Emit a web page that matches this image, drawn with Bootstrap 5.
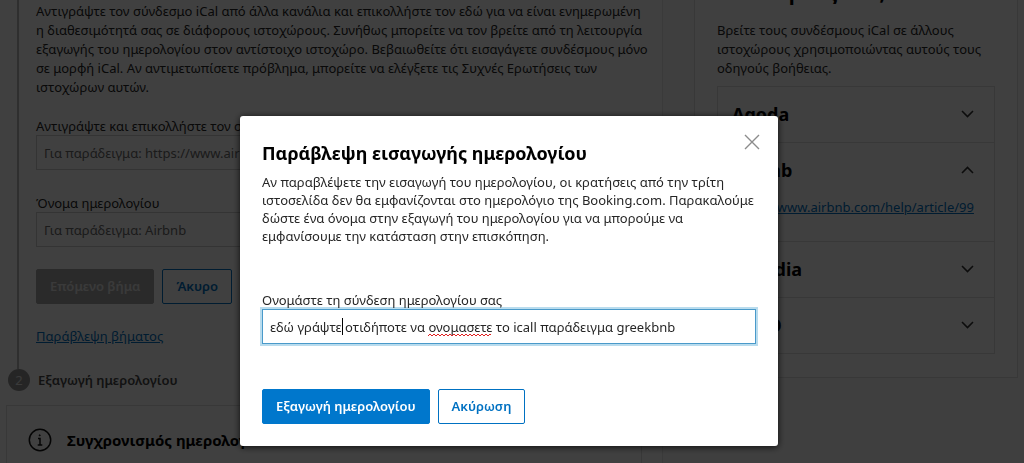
<!DOCTYPE html>
<html lang="el">
<head>
<meta charset="utf-8">
<meta name="viewport" content="width=device-width, initial-scale=1">
<title>Συγχρονισμός ημερολογίου</title>
<link href="https://cdn.jsdelivr.net/npm/bootstrap@5.3.0/dist/css/bootstrap.min.css" rel="stylesheet">
<style>
  body { font: 13px/19px "Noto Sans", "Open Sans", sans-serif; color: #262626; background: #f6f6f6; height: 100vh; overflow: hidden; }
  a { color: #0071c2; }
  .page-grid { display: grid; grid-template-columns: minmax(0, 663fr) minmax(0, 324fr); column-gap: 31px; padding-right: 6px; background: #fafafa; }
  .steps { background: #fff; border-right: 1px solid #e6e6e6; min-height: 100vh; }
  .step-body { margin-left: 17px; border-left: 2px solid #bdbdbd; padding: 2px 20px 23px 17px; }
  .step-intro { margin-bottom: 20px; white-space: nowrap; }
  label { display: block; line-height: 18px; }
  .form-control { font-size: 13px; line-height: 19px; height: 35px; padding: 7px; border: 1px solid #cfcfcf; border-radius: 0; color: #262626; }
  .form-control::placeholder { color: #6b6b6b; }
  .btn { font-size: 13px; line-height: 19px; font-weight: 600; padding: 7px 13px; border-radius: 2px; }
  .btn-main { background: #0077cc; border-color: #0077cc; color: #fff; }
  .btn-line { border-color: #0071c2; color: #0071c2; background: #fff; }
  .btn-off, .btn-off:disabled { background: #a8a8a8; border-color: #a8a8a8; color: #e6e6e6; opacity: 1; }
  .step-actions { margin: 22px 0 23px; }
  .step-number { width: 22px; height: 22px; border-radius: 50%; background: #949494; color: #e6e6e6; line-height: 22px; text-align: center; }
  .step-title { font-weight: 600; color: #4a4a4a; }
  .sync-card { margin: 14px 20px 0 6px; padding: 21px; gap: 15px; border: 1px solid #dedede; }
  .sync-card h2 { font-size: 15px; line-height: 26px; font-weight: 700; margin: 0; color: #000; }
  .help-card { background: #fff; border: 1px solid #e0e0e0; border-top: 0; padding: 0 22px 23px; align-self: start; overflow: hidden; }
  .help-card > h2 { font-size: 20px; line-height: 26px; font-weight: 700; color: #000; margin: -20px 0 15px; }
  .help-card > p { margin-bottom: 8px; }
  .help-list { border: 1px solid #e0e0e0; }
  .help-list section + section { border-top: 1px solid #e0e0e0; }
  .help-toggle { border: 0; background: none; padding: 14px 20px 15px 14px; color: #000; font-size: 18px; line-height: 26px; font-weight: 700; }
  .help-link { padding: 0 14px 24px; }
  .modal-backdrop.show { opacity: .75; }
  .modal { padding-right: 6px; }
  .modal-dialog { max-width: 538px; margin: 116px auto 0; }
  .modal-content { border: 0; border-radius: 3px; padding: 23px 22px 22px; box-shadow: 0 1px 7px rgba(0,0,0,.8); color: #262626; }
  .modal-title { font-size: 18px; line-height: 28px; font-weight: 700; color: #000; }
  .modal-text { line-height: 18px; margin: 6px 0 46px; }
  .close-x { border: 0; background: none; padding: 0; line-height: 0; margin: -5px -4px 0 0; }
  .naming .form-control { border-color: #4a9aca; box-shadow: 0 0 0 2px #b9dcee; }
  .naming-label { position: relative; z-index: 1; }
  .modal-actions { margin-top: 45px; }
  .caret-bar { position: absolute; left: 80px; top: 9px; width: 1px; height: 17px; background: #000; }
  .spelling { position: absolute; left: 166px; top: 24px; }
</style>
</head>
<body>
<main class="page-grid">
  <div class="steps">
    <div class="step-body">
      <p class="step-intro">Αντιγράψτε τον σύνδεσμο iCal από άλλα κανάλια και επικολλήστε τον εδώ για να είναι ενημερωμένη<br>η διαθεσιμότητά σας σε διάφορους ιστοχώρους. Συνήθως μπορείτε να τον βρείτε από τη λειτουργία<br>εξαγωγής του ημερολογίου στον αντίστοιχο ιστοχώρο. Βεβαιωθείτε ότι εισαγάγετε συνδέσμους μόνο<br>σε μορφή iCal. Αν αντιμετωπίσετε πρόβλημα, μπορείτε να ελέγξετε τις Συχνές Ερωτήσεις των<br>ιστοχώρων αυτών.</p>
      <label for="ical-url">Αντιγράψτε και επικολλήστε τον σύνδεσμο</label>
      <input class="form-control mb-4" id="ical-url" type="text" placeholder="Για παράδειγμα: https://www.airbnb.com">
      <label for="ical-name">Όνομα ημερολογίου</label>
      <input class="form-control" id="ical-name" type="text" placeholder="Για παράδειγμα: Airbnb">
      <div class="step-actions d-flex gap-2">
        <button class="btn btn-off" type="button" disabled>Επόμενο βήμα</button>
        <button class="btn btn-line" type="button">Άκυρο</button>
      </div>
      <a href="#skip">Παράβλεψη βήματος</a>
    </div>
    <div class="d-flex align-items-center gap-2 ps-2">
      <span class="step-number">2</span><span class="step-title">Εξαγωγή ημερολογίου</span>
    </div>
    <div class="sync-card d-flex align-items-center">
      <svg width="24" height="24" viewBox="0 0 24 24" fill="none" stroke="#111" stroke-width="1.5" aria-hidden="true"><circle cx="12" cy="12" r="10.7"/><path d="M10 10.5h2V17M9.7 17h4.6"/><circle cx="11.7" cy="7.3" r=".6" fill="#111" stroke-width=".8"/></svg>
      <h2>Συγχρονισμός ημερολογίου</h2>
    </div>
  </div>
  <aside class="help-card">
    <h2>συνδέσμους iCal;</h2>
    <p>Βρείτε τους συνδέσμους iCal σε άλλους<br>ιστοχώρους χρησιμοποιώντας αυτούς τους<br>οδηγούς βοήθειας.</p>
    <div class="help-list">
      <section><button type="button" class="help-toggle d-flex w-100 align-items-center justify-content-between">Agoda<svg width="13" height="9" viewBox="0 0 13 9" fill="none" stroke="#333" stroke-width="1.6" aria-hidden="true"><path d="M1 1l5.500 5.500L12 1"/></svg></button></section>
      <section><button type="button" class="help-toggle d-flex w-100 align-items-center justify-content-between">Airbnb<svg width="13" height="9" viewBox="0 0 13 9" fill="none" stroke="#333" stroke-width="1.6" aria-hidden="true"><path d="M1 7l5.500-5.500L12 7"/></svg></button>
        <div class="help-link text-nowrap"><a href="https://www.airbnb.com/help/article/99">https://www.airbnb.com/help/article/99</a></div></section>
      <section><button type="button" class="help-toggle d-flex w-100 align-items-center justify-content-between">Expedia<svg width="13" height="9" viewBox="0 0 13 9" fill="none" stroke="#333" stroke-width="1.6" aria-hidden="true"><path d="M1 1l5.500 5.500L12 1"/></svg></button></section>
      <section><button type="button" class="help-toggle d-flex w-100 align-items-center justify-content-between">VRBO<svg width="13" height="9" viewBox="0 0 13 9" fill="none" stroke="#333" stroke-width="1.6" aria-hidden="true"><path d="M1 1l5.500 5.500L12 1"/></svg></button></section>
    </div>
  </aside>
</main>
<div class="modal-backdrop show"></div>
<div class="modal show d-block" tabindex="-1" role="dialog" aria-modal="true" aria-labelledby="skip-title">
  <div class="modal-dialog">
    <div class="modal-content">
      <div class="d-flex justify-content-between align-items-start">
        <h1 class="modal-title" id="skip-title">Παράβλεψη εισαγωγής ημερολογίου</h1>
        <button class="close-x" type="button" aria-label="Κλείσιμο"><svg width="16" height="16" viewBox="0 0 16 16" fill="none" stroke="#8c8c8c" stroke-width="1.400"><path d="M1 1l14 14M15 1L1 15"/></svg></button>
      </div>
      <p class="modal-text">Αν παραβλέψετε την εισαγωγή του ημερολογίου, οι κρατήσεις από την τρίτη<br>ιστοσελίδα δεν θα εμφανίζονται στο ημερολόγιο της Booking.com. Παρακαλούμε<br>δώστε ένα όνομα στην εξαγωγή του ημερολογίου για να μπορούμε να<br>εμφανίσουμε την κατάσταση στην επισκόπηση.</p>
      <label class="naming-label" for="link-name">Ονομάστε τη σύνδεση ημερολογίου σας</label>
      <div class="naming position-relative">
        <input class="form-control" id="link-name" type="text" spellcheck="false" value="εδώ γράψτε οτιδήποτε να ονομασετε το icall παράδειγμα greekbnb">
        <span class="caret-bar"></span>
        <svg class="spelling" width="63" height="4" fill="none" stroke="#e02020" aria-hidden="true"><defs><pattern id="wave" width="4" height="4" patternUnits="userSpaceOnUse"><path d="M0 3L2 1L4 3"/></pattern></defs><rect width="63" height="4" fill="url(#wave)" stroke="none"/></svg>
      </div>
      <div class="modal-actions d-flex gap-2">
        <button class="btn btn-main" type="button">Εξαγωγή ημερολογίου</button>
        <button class="btn btn-line" type="button">Ακύρωση</button>
      </div>
    </div>
  </div>
</div>
<script src="https://cdn.jsdelivr.net/npm/bootstrap@5.3.0/dist/js/bootstrap.bundle.min.js"></script>
</body>
</html>
